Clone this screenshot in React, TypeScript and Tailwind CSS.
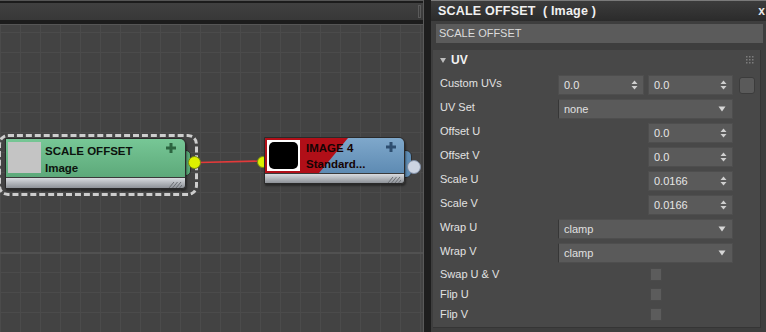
import React from 'react';

const Arrows = () => (
  <svg width="7" height="10" viewBox="0 0 7 10">
    <path d="M3.5 0.5L6.5 4H0.5z M3.5 9.5L0.5 6h6z" fill="#cfcfcf" />
  </svg>
);

const Caret = () => (
  <svg width="8" height="6" viewBox="0 0 8 6">
    <path d="M0.5 0.5h7L4 5.5z" fill="#d6d6d6" />
  </svg>
);

const Plus = ({ color }: { color: string }) => (
  <svg width="10" height="10" viewBox="0 0 10 10">
    <path d="M3.5 0h3v3.5H10v3H6.5V10h-3V6.5H0v-3h3.5z" fill={color} />
  </svg>
);

const Hatch = () => (
  <svg width="14" height="7" viewBox="0 0 14 7">
    <path d="M1 7L6 1M4.5 7L9.5 1M8 7L13 1M11.5 7L14 4" stroke="#6a6d72" strokeWidth="1" />
  </svg>
);

const Spinner = ({ value, w }: { value: string; w: string }) => (
  <div
    className={`flex h-[20px] ${w} items-center justify-between border border-[#4e4e4e] bg-[#5a5a5a] pl-[5px] pr-[5px] text-[11px] text-[#e6e6e6]`}
  >
    <span>{value}</span>
    <Arrows />
  </div>
);

const Dropdown = ({ value }: { value: string }) => (
  <div className="flex h-[20px] w-[175px] items-center justify-between border border-[#4e4e4e] border-l-[#363636] bg-[#5a5a5a] pl-[5px] pr-[6px] text-[11px] text-[#e0e0e0]">
    <span>{value}</span>
    <Caret />
  </div>
);

const Row = ({ label, children }: { label: string; children?: React.ReactNode }) => (
  <div className="flex h-[24px] items-center">
    <div className="w-[125px] pb-[3px] pl-[7px] text-[11px] text-[#e2e2e2]">{label}</div>
    {children}
  </div>
);

const CheckRow = ({ label }: { label: string }) => (
  <div className="flex h-[20px] items-center">
    <div className="w-[125px] pl-[7px] text-[11px] text-[#e2e2e2]">{label}</div>
    <div className="ml-[92px] h-[13px] w-[12px] border border-[#4a4a4a] bg-[#5c5c5c]" />
  </div>
);

export default function App() {
  return (
    <div className="flex h-[332px] w-[766px] overflow-hidden bg-[#1e1e1e] font-['Liberation_Sans',Arial,sans-serif]">
      {/* node editor */}
      <div className="flex w-[424px] flex-col border-r border-[#5a5a5a]">
        <div className="h-[3px] border-t border-[#555] bg-[#1c1c1c]" />
        <div className="flex h-[17px] justify-end bg-gradient-to-b from-[#404040] to-[#383838] pr-[2px] pt-[2px]">
          <div className="h-[13px] w-[3px] border border-[#5a5a5a]" />
        </div>
        <div className="h-[4px] bg-[#1c1c1c]" />
        <div className="relative flex-1 overflow-hidden border-t border-[#555] bg-[#434343] [background-image:linear-gradient(to_bottom,transparent_227px,#515151_227px,#515151_229px,transparent_229px),linear-gradient(to_right,#4b4b4b_1px,transparent_1px),linear-gradient(to_bottom,#4b4b4b_1px,transparent_1px)] [background-size:100%_100%,20px_20px,20px_20px] [background-position:0_0,0_0,0_7px]">
          {/* wire */}
          <svg className="absolute inset-0" width="423" height="307">
            <line x1="199" y1="137.5" x2="262" y2="136" stroke="#e33a3a" strokeWidth="1.6" />
          </svg>

          {/* SCALE OFFSET node */}
          <div className="absolute left-[-2px] top-[109px] h-[62px] w-[200px] rounded-[10px] border-[3px] border-dashed border-[#cdcdcd]" />
          <div className="absolute left-[184px] top-[125px] h-[26px] w-[7px] rounded-r-[5px] border border-[#2e2e2e] bg-[#5aa877]" />
          <div className="absolute left-[188px] top-[131px] h-[13px] w-[13px] rounded-full border border-[#7a8a10] bg-[#dcf000]" />
          <div className="absolute left-[5px] top-[113px] flex h-[51px] w-[181px] flex-col overflow-hidden rounded-tr-[6px] rounded-br-[4px] border border-[#2a2a2a] shadow-[1px_2px_2px_rgba(0,0,0,0.4)]">
            <div className="relative flex h-[39px] bg-gradient-to-b from-[#77c796] to-[#5da97a] pl-[2px] pt-[3px]">
              <div className="h-[31px] w-[33px] bg-[#c4c4c4]" />
              <div className="ml-[4px] pt-[1px] text-[11.5px] font-bold leading-[17px] text-[#0c130e]">
                <div>SCALE OFFSET</div>
                <div>Image</div>
              </div>
              <div className="absolute left-[160px] top-[4px]">
                <Plus color="#2c6540" />
              </div>
            </div>
            <div className="flex h-[11px] items-end justify-end border-t border-[#3a3a3a] bg-gradient-to-b from-[#d9dce0] to-[#8e9298] pr-[3px]">
              <Hatch />
            </div>
          </div>

          {/* IMAGE 4 node */}
          <div className="absolute left-[257px] top-[131px] h-[12px] w-[12px] rounded-full border border-[#7a8a10] bg-[#dcf000]" />
          <div className="absolute left-[403px] top-[125px] h-[28px] w-[9px] rounded-r-[6px] border border-[#2e2e2e] bg-[#5f8db5]" />
          <div className="absolute left-[407px] top-[135px] h-[14px] w-[14px] rounded-full border border-[#7f8ea6] bg-[#ccd4e2]" />
          <div className="absolute left-[264px] top-[112px] flex h-[47px] w-[141px] flex-col overflow-hidden rounded-tr-[6px] rounded-br-[4px] border border-[#2a2a2a] shadow-[1px_2px_2px_rgba(0,0,0,0.4)]">
            <div className="relative flex h-[35px] bg-gradient-to-b from-[#7fa8cb] to-[#5e8bb3] pl-[2px] pt-[2px]">
              <div className="absolute inset-0 bg-[#b10f18] [clip-path:polygon(0_0,83px_0,54px_100%,0_100%)]" />
              <div className="relative h-[31px] w-[33px] bg-white p-[2px]">
                <div className="h-full w-full rounded-[5px] bg-black" />
              </div>
              <div className="relative ml-[6px] text-[11.5px] font-bold leading-[17px] text-[#160404]">
                <div>IMAGE 4</div>
                <div className="-mt-[1px]">Standard...</div>
              </div>
              <div className="absolute left-[121px] top-[4px]">
                <Plus color="#2e4e70" />
              </div>
            </div>
            <div className="flex h-[11px] items-end justify-end border-t border-[#3a3a3a] bg-gradient-to-b from-[#d9dce0] to-[#8e9298] pr-[3px]">
              <Hatch />
            </div>
          </div>
        </div>
      </div>

      <div className="w-[7px] bg-[#1e1e1e]" />

      {/* parameter panel */}
      <div className="flex w-[335px] flex-col bg-[#3e3e3e]">
        <div className="flex h-[21px] items-center justify-between border-t border-[#7a7a7a] bg-gradient-to-b from-[#3c3c3c] to-[#2b2b2b] pl-[7px] pr-[1px]">
          <span className="whitespace-pre text-[12.5px] font-bold tracking-[0.2px] text-[#f0f0f0]">
            SCALE OFFSET  ( Image )
          </span>
          <span className="text-[12px] font-bold text-[#e8e8e8]">x</span>
        </div>
        <div className="ml-[5px] mr-[3px] mt-[3px] flex h-[19px] items-center bg-[#5b5b5b] pl-[3px] text-[11px] text-[#dcdcdc]">
          SCALE OFFSET
        </div>
        <div className="flex flex-1 pb-[4px] pt-[7px]">
          <div className="ml-[2px] flex w-[328px] flex-col border-b border-r border-[#353535] bg-[#484848]">
            <div className="flex h-[23px] items-center justify-between pb-[3px] pl-[7px] pr-[6px]">
              <div className="flex items-center gap-[5px]">
                <svg width="6" height="5" viewBox="0 0 6 5">
                  <path d="M0 0h6L3 5z" fill="#bdbdbd" />
                </svg>
                <span className="text-[12px] font-bold text-[#f2f2f2]">UV</span>
              </div>
              <svg width="8" height="8" viewBox="0 0 8 8" fill="#7c7c7c">
                <rect x="0" y="0" width="1.5" height="1.5" />
                <rect x="3" y="0" width="1.5" height="1.5" />
                <rect x="6" y="0" width="1.5" height="1.5" />
                <rect x="0" y="3" width="1.5" height="1.5" />
                <rect x="3" y="3" width="1.5" height="1.5" />
                <rect x="6" y="3" width="1.5" height="1.5" />
                <rect x="0" y="6" width="1.5" height="1.5" />
                <rect x="3" y="6" width="1.5" height="1.5" />
                <rect x="6" y="6" width="1.5" height="1.5" />
              </svg>
            </div>
            <Row label="Custom UVs">
              <div className="flex items-center gap-[4px]">
                <Spinner value="0.0" w="w-[86px]" />
                <Spinner value="0.0" w="w-[85px]" />
                <div className="ml-[2px] h-[17px] w-[16px] rounded-[3px] border border-[#3c3c3c] bg-[#5a5a5a]" />
              </div>
            </Row>
            <Row label="UV Set">
              <Dropdown value="none" />
            </Row>
            <Row label="Offset U">
              <div className="ml-[90px]">
                <Spinner value="0.0" w="w-[85px]" />
              </div>
            </Row>
            <Row label="Offset V">
              <div className="ml-[90px]">
                <Spinner value="0.0" w="w-[85px]" />
              </div>
            </Row>
            <Row label="Scale U">
              <div className="ml-[90px]">
                <Spinner value="0.0166" w="w-[85px]" />
              </div>
            </Row>
            <Row label="Scale V">
              <div className="ml-[90px]">
                <Spinner value="0.0166" w="w-[85px]" />
              </div>
            </Row>
            <Row label="Wrap U">
              <Dropdown value="clamp" />
            </Row>
            <Row label="Wrap V">
              <Dropdown value="clamp" />
            </Row>
            <div className="-mt-[1px]">
              <CheckRow label="Swap U & V" />
              <CheckRow label="Flip U" />
              <CheckRow label="Flip V" />
            </div>
          </div>
        </div>
      </div>
    </div>
  );
}
